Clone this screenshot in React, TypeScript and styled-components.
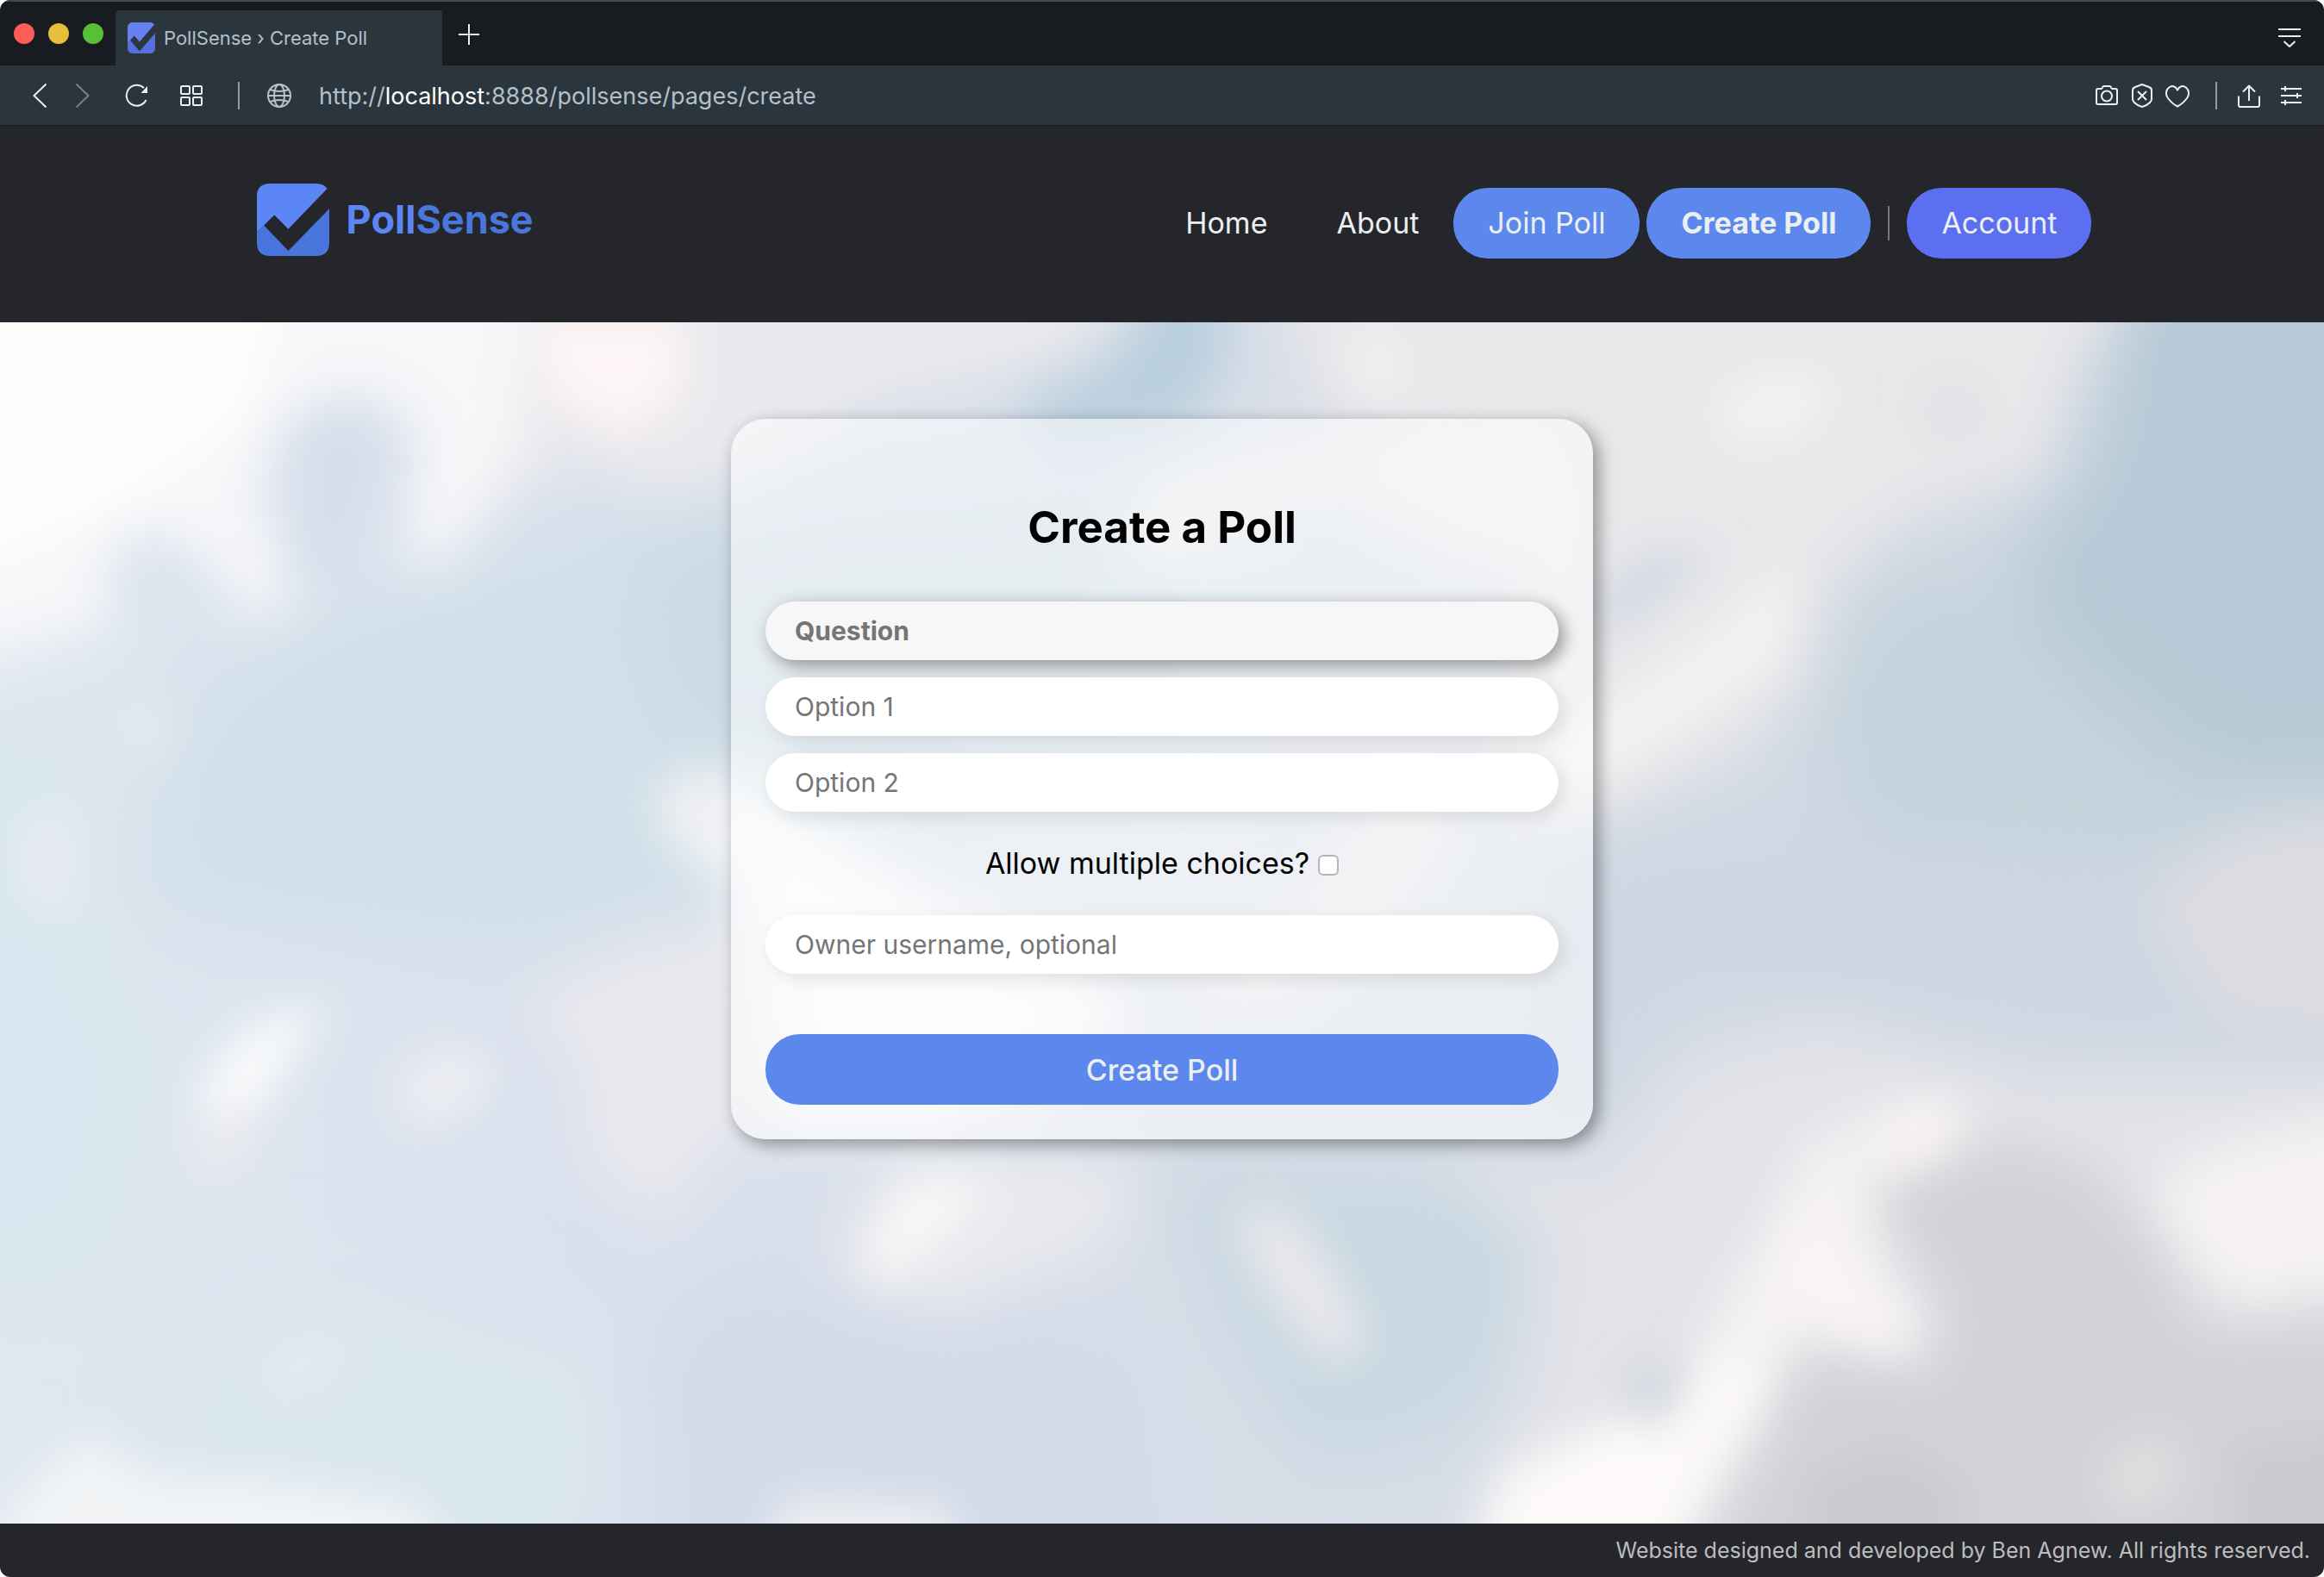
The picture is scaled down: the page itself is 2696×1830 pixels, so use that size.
import React from "react";
import styled, { createGlobalStyle } from "styled-components";

const colors = {
  strip: "#181c20",
  chrome: "#2b353e",
  chromeIcon: "#eceff0",
  chromeText: "#b3c0ca",
  panel: "#25262b",
  primary: "#5c88ee",
  account: "#5c6ff0",
  light: "#eceff1",
  hint: "#757575",
};

const GlobalStyle = createGlobalStyle`
  *, *::before, *::after { box-sizing: border-box; }
  body {
    margin: 0;
    background: #fff;
    font-family: Inter, "Open Sans", sans-serif;
  }
  button, input { font-family: inherit; }
`;

const Window = styled.div`
  display: flex;
  flex-direction: column;
  min-height: 100vh;
  border-radius: 12px;
  overflow: hidden;
`;

/* Browser chrome */

const TabStrip = styled.div`
  display: flex;
  align-items: flex-end;
  height: 76px;
  padding-right: 26px;
  background: ${colors.strip};
  border-top: 2px solid #44494d;
`;

const TrafficLights = styled.div`
  display: flex;
  align-self: center;
  gap: 16px;
  padding: 0 14px 0 16px;
`;

const Light = styled.button<{ $color: string }>`
  width: 24px;
  height: 24px;
  padding: 0;
  border: 0;
  border-radius: 50%;
  background: ${(p) => p.$color};
`;

const Tab = styled.div`
  display: flex;
  align-items: center;
  gap: 10px;
  width: 379px;
  height: 64px;
  padding: 0 14px;
  border-radius: 4px 4px 0 0;
  background: ${colors.chrome};
  color: ${colors.chromeText};
  font-size: 22px;
  line-height: 28px;
`;

const IconButton = styled.button<{ $dim?: boolean }>`
  display: flex;
  padding: 0;
  border: 0;
  background: none;
  color: ${colors.chromeIcon};
  opacity: ${(p) => (p.$dim ? 0.4 : 1)};
`;

const StripButton = styled(IconButton)`
  align-self: center;
  margin-left: 17px;
`;

const StripMenu = styled(IconButton)`
  align-self: center;
  margin-left: auto;
  padding-top: 12px;
`;

const Toolbar = styled.div`
  display: flex;
  align-items: center;
  height: 70px;
  padding: 0 24px 0 32px;
  background: ${colors.chrome};
  border-bottom: 1px solid #17191d;
`;

const IconGroup = styled.div<{ $gap: number }>`
  display: flex;
  align-items: center;
  gap: ${(p) => p.$gap}px;
`;

const ToolbarRule = styled.span<{ $before: number; $after: number }>`
  width: 2px;
  height: 32px;
  margin: 0 ${(p) => p.$after}px 0 ${(p) => p.$before}px;
  background: #9a9a9a;
`;

const Address = styled.div`
  flex: 1;
  padding: 3px 0 0 32px;
  color: ${colors.chromeText};
  font-size: 27px;
  line-height: 34px;
`;

const Host = styled.span`
  color: #fff;
`;

/* Site */

const SiteHeader = styled.header`
  display: flex;
  align-items: center;
  justify-content: space-between;
  height: 228px;
  padding: 0 10% 2px;
  background: ${colors.panel};
`;

const Brand = styled.a`
  display: flex;
  align-items: center;
  gap: 20px;
  padding: 0 0 8px 28px;
  color: #5b86f3;
  font-size: 45px;
  font-weight: 700;
  line-height: 52px;
  text-decoration: none;
`;

const BrandTail = styled.span`
  color: #4976dc;
`;

const SiteNav = styled.nav`
  display: flex;
  align-items: center;
`;

const NavLink = styled.a<{ $fill?: string; $active?: boolean }>`
  padding: 21px 40px;
  border-radius: 40px;
  background: ${(p) => p.$fill ?? "none"};
  color: ${colors.light};
  font-size: 34px;
  font-weight: ${(p) => (p.$active ? 700 : 400)};
  line-height: 40px;
  text-decoration: none;
`;

const PillPair = styled.div`
  display: flex;
  gap: 8px;
`;

const NavRule = styled.span`
  width: 2px;
  height: 40px;
  margin: 0 20px;
  background: #77797c;
`;

const Main = styled.main`
  position: relative;
  display: flex;
  flex: 1;
  flex-direction: column;
  align-items: center;
  padding: 112px 40px;
`;

const SkyCanvas = styled.svg`
  position: absolute;
  inset: 0;
  width: 100%;
  height: 100%;
`;

const Card = styled.form`
  position: relative;
  display: flex;
  flex-direction: column;
  gap: 20px;
  width: 100%;
  max-width: 1000px;
  padding: 40px;
  border-radius: 40px;
  background: rgba(255, 255, 255, 0.52);
  box-shadow: 6px 6px 20px rgba(0, 0, 0, 0.4);
`;

const Title = styled.h1`
  margin: 56px 0 36px;
  color: #000;
  font-size: 51px;
  font-weight: 700;
  line-height: 60px;
  text-align: center;
`;

const Field = styled.input<{ $strong?: boolean }>`
  width: 100%;
  height: 68px;
  padding: 0 34px;
  border: 0;
  border-radius: 34px;
  outline: 0;
  background: ${(p) => (p.$strong ? "#f7f7f7" : "#fff")};
  box-shadow: 6px 6px 20px rgba(0, 0, 0, ${(p) => (p.$strong ? 0.4 : 0.1)});
  font-size: 30px;
  font-weight: ${(p) => (p.$strong ? 700 : 400)};
  &::placeholder {
    color: ${colors.hint};
    opacity: 1;
  }
`;

const CheckRow = styled.label`
  display: flex;
  align-items: center;
  justify-content: center;
  gap: 10px;
  margin: 20px 0;
  color: #000;
  font-size: 34px;
  line-height: 40px;
`;

const Checkbox = styled.input`
  appearance: none;
  width: 24px;
  height: 24px;
  margin: 4px 0 0;
  border: 2px solid #b4b5b6;
  border-radius: 6px;
  background: #fff;
  &:checked { background: ${colors.primary}; }
`;

const Submit = styled.button`
  height: 82px;
  margin-top: 50px;
  border: 0;
  border-radius: 40px;
  background: ${colors.primary};
  color: ${colors.light};
  font-size: 34px;
  font-weight: 500;
`;

const SiteFooter = styled.footer`
  padding: 16px;
  background: ${colors.panel};
  color: #bcbdbe;
  font-size: 25px;
  line-height: 30px;
  text-align: right;
`;

/* Drawings */

const Logo = ({ size, height, light, dark }: { size: number; height: number; light: string; dark: string }) => (
  <svg width={size} height={height} viewBox="0 0 83 83" preserveAspectRatio="none" aria-hidden="true">
    <path fill={light} d="M0 56L20 36L36 52L80.500 6Q77 0 68 0H15Q0 0 0 15Z" />
    <path fill={dark} d="M0 56L8 48L36 77L83 29V68Q83 83 68 83H15Q0 83 0 68Z" />
  </svg>
);

const Glyph = ({ children }: { children: React.ReactNode }) => (
  <svg
    width="28"
    height="28"
    viewBox="0 0 28 28"
    fill="none"
    stroke="currentColor"
    strokeWidth={2}
    strokeLinejoin="round"
    aria-hidden="true"
  >
    {children}
  </svg>
);

/* Cloud layers, painted back to front: [colour, points] */
type Shape = [string, string];

const wide: Shape[] = [
  ["#d2e0e9", "230,480 420,360 800,250 1120,200 1568,150 1800,250 1700,520 1300,600 1000,720 700,800 400,770 180,740"],
  ["#cbd9e2", "860,300 1120,220 1560,200 1600,500 1100,560 900,500"],
  ["#d8e7ef", "-200,520 120,540 130,800 220,880 150,1180 -200,1240"],
  ["#dae6ee", "360,1180 620,1240 830,1280 860,1400 700,1700 300,1700 200,1350"],
  ["#d3dbe8", "1000,1180 1560,1260 1620,1700 900,1600 850,1280"],
  ["#c9d8e1", "1560,1040 2060,1080 2060,1250 1980,1380 1760,1440 1640,1250"],
  ["#ced7e2", "2100,640 2500,600 3000,720 3136,900 2700,900 2300,860 2130,1020 2060,960"],
  ["#c5d3dc", "2440,480 2560,300 2900,400 3300,480 3300,620 2900,680 2500,640"],
  ["#b5c9d6", "2700,300 2820,200 2850,60 2900,-200 3340,-200 3340,560 2980,560 2800,420"],
];

const soft: Shape[] = [
  ["#ebe9ed", "700,-60 1560,-60 1420,50 1180,95 1010,190 880,215 780,170 700,210 600,290 560,250 640,100"],
  ["#f7f7f9", "-100,-100 740,-100 710,60 690,170 640,250 590,310 545,290 570,130 480,85 380,120 345,220 400,350 330,370 290,300 200,260 140,290 150,380 60,400 -100,440"],
  ["#fffefc", "-100,-100 400,-100 330,120 160,230 -100,330"],
  ["#b9cfdd", "1360,100 1500,50 1580,-100 1640,-100 1660,50 1600,130 1420,160"],
  ["#e9e7ea", "1720,-100 2900,-100 2800,60 2750,190 2580,240 2470,320 2430,460 2320,550 2150,620 2020,620 2060,420 2060,240 1960,130 1780,110"],
  ["#ece9ed", "1500,300 1560,200 1900,130 2100,130 2140,320 1980,300 1800,210 1600,300"],
  ["#f8f8f9", "950,560 1060,600 1260,720 1450,800 1540,870 1400,960 1250,1010 1040,1010 960,840 1000,700 920,650"],
  ["#e9e8ee", "700,850 850,780 1010,750 1060,1010 960,1030 930,1090 880,1120 790,1050 780,930"],
  ["#eae8ec", "1560,840 1760,740 1840,620 1920,560 1960,640 1860,760 1720,850"],
  ["#e2e2e8", "1940,1040 2160,1060 2280,920 2450,870 2750,940 3300,940 3300,1600 1960,1600 2060,1330 2090,1150"],
  ["#dedce2", "2900,720 3020,640 3300,600 3300,900 3000,870"],
  ["#e9e9ee", "1180,1070 1400,1030 1540,1070 1480,1160 1340,1210 1280,1240 1120,1190"],
  ["#f6f3f3", "1960,1600 2020,1430 2260,1370 2330,1220 2390,1130 2440,1030 2600,970 2700,1010 2540,1090 2540,1200 2620,1280 2420,1280 2370,1400 2300,1480 2240,1600"],
  ["#d3d2d8", "2510,1090 2680,1010 2820,1050 2920,1150 2970,1250 3300,1230 3300,1600 2260,1600 2400,1330 2440,1270 2600,1310 2620,1220"],
  ["#f6f3f2", "2900,1080 3000,1030 3300,960 3300,1180 3020,1230 2950,1170"],
];

const fine: Shape[] = [
  ["#d5deea", "400,150 470,110 520,150 500,230 460,310 415,310"],
  ["#dbe3ee", "185,290 240,310 260,370 210,390"],
  ["#fdf5f5", "720,-10 920,-10 920,90 840,140 740,90"],
  ["#f8f9fa", "270,950 330,880 440,850 390,930 340,1000 270,1000"],
  ["#e8e9ef", "250,1000 370,970 330,1060 270,1080"],
  ["#edeef3", "530,960 580,910 670,920 650,970 570,1010"],
  ["#f1f0f3", "890,580 950,570 1000,640 930,650 890,620"],
  ["#e8e7ec", "1660,1110 1740,1110 1800,1180 1850,1280 1790,1300 1700,1200"],
  ["#f7f7f7", "1170,1160 1220,1070 1350,1070 1270,1150 1180,1200"],
  ["#f0eff0", "1820,20 1890,10 1900,90 1830,90"],
  ["#f3f2f1", "2310,100 2380,60 2480,70 2440,140 2340,160"],
  ["#f4f2f2", "2080,560 2150,490 2300,400 2420,300 2400,420 2260,510 2120,590"],
  ["#d0d8e3", "2160,340 2220,290 2320,290 2220,360 2160,400"],
  ["#e0dfe3", "2590,90 2650,80 2690,130 2620,150"],
  ["#cbcad0", "2440,1440 2560,1400 2660,1460 2620,1600 2420,1600"],
  ["#cacbd0", "3010,1400 3200,1380 3200,1600 3000,1600"],
  ["#e4e0e1", "2840,1430 2920,1390 2940,1450 2860,1490"],
  ["#d0d7de", "2190,1320 2250,1290 2260,1350 2210,1370"],
  ["#fdfaf9", "2040,1460 2180,1380 2260,1400 2340,1280 2370,1330 2300,1430 2200,1600 2000,1600"],
  ["#f9f4f4", "2400,1200 2440,1110 2490,1190 2580,1260 2540,1280"],
  ["#faf4f2", "2540,1010 2620,980 2640,1010 2560,1050"],
  ["#e6eaf2", "20,620 90,600 110,650 100,740 40,740 20,700"],
  ["#e3e9f1", "160,490 220,470 230,530 180,550"],
  ["#f2f4f6", "-60,1600 40,1450 120,1390 200,1440 380,1450 560,1480 640,1600"],
  ["#e8ebef", "340,1310 430,1270 480,1285 390,1340"],
  ["#eeeff2", "1010,1600 1060,1470 1280,1480 1300,1600"],
];

const Layer = ({ shapes, blur }: { shapes: Shape[]; blur: string }) => (
  <g filter={`url(#${blur})`}>
    {shapes.map(([fill, points]) => (
      <polygon key={points} fill={fill} points={points} />
    ))}
  </g>
);

const blurs: Array<[string, number]> = [
  ["wide", 54],
  ["soft", 34],
  ["fine", 26],
];

const Sky = () => (
  <SkyCanvas viewBox="0 0 3136 1501" preserveAspectRatio="none" aria-hidden="true">
    <defs>
      {blurs.map(([id, deviation]) => (
        <filter key={id} id={id} filterUnits="userSpaceOnUse" x="-300" y="-300" width="3736" height="2101">
          <feGaussianBlur stdDeviation={deviation} />
        </filter>
      ))}
      <linearGradient id="shade" x1="0" x2="1" y1="0" y2="0">
        <stop offset="0" stopColor="#dfe7f0" />
        <stop offset="0.25" stopColor="#dae1ed" />
        <stop offset="0.5" stopColor="#d9dfe9" />
        <stop offset="1" stopColor="#d0d8e2" />
      </linearGradient>
    </defs>
    <rect width="3136" height="1501" fill="url(#shade)" />
    <Layer shapes={wide} blur="wide" />
    <Layer shapes={soft} blur="soft" />
    <Layer shapes={fine} blur="fine" />
  </SkyCanvas>
);

export default function App() {
  return (
    <>
      <GlobalStyle />
      <Window>
        <TabStrip>
          <TrafficLights>
            <Light $color="#fe5c57" aria-label="Close" />
            <Light $color="#e5bf3c" aria-label="Minimise" />
            <Light $color="#58c038" aria-label="Zoom" />
          </TrafficLights>
          <Tab>
            <Logo size={32} height={36} light="#6680f0" dark="#566fdc" />
            PollSense › Create Poll
          </Tab>
          <StripButton aria-label="New tab">
            <Glyph>
              <path d="M14 3V27M2 15H26" />
            </Glyph>
          </StripButton>
          <StripMenu aria-label="Tab menu">
            <Glyph>
              <path d="M1 3H27M1 11H27M7.500 17L14 23L20.500 17" />
            </Glyph>
          </StripMenu>
        </TabStrip>

        <Toolbar>
          <IconGroup $gap={35}>
            <IconGroup $gap={22}>
              <IconButton aria-label="Back">
                <Glyph>
                  <path d="M21.500 0.500L7.500 14L21.500 27.500" />
                </Glyph>
              </IconButton>
              <IconButton aria-label="Forward" $dim>
                <Glyph>
                  <path d="M6.500 0.500L20.500 14L6.500 27.500" />
                </Glyph>
              </IconButton>
            </IconGroup>
            <IconButton aria-label="Reload">
              <Glyph>
                <path d="M24.500 19A12 12 0 1 1 22 5" />
                <path d="M26 3V11H18.500Z" fill="currentColor" stroke="none" />
              </Glyph>
            </IconButton>
            <IconButton aria-label="Speed dial">
              <Glyph>
                <rect x="2" y="3" width="10" height="9" rx="1" />
                <rect x="16" y="3" width="10" height="9" rx="1" />
                <rect x="2" y="16" width="10" height="9" rx="1" />
                <rect x="16" y="16" width="10" height="9" rx="1" />
              </Glyph>
            </IconButton>
          </IconGroup>
          <ToolbarRule $before={40} $after={32} />
          <IconButton aria-label="Site information">
            <Glyph>
              <g opacity="0.75">
                <circle cx="14" cy="14" r="13" />
                <ellipse cx="14" cy="14" rx="6" ry="13" />
                <path d="M1 14H27M3.500 7Q14 11 24.500 7M3.500 21Q14 17 24.500 21" />
              </g>
            </Glyph>
          </IconButton>
          <Address>
            http://<Host>localhost</Host>:8888/pollsense/pages/create
          </Address>
          <IconGroup $gap={13}>
            <IconButton aria-label="Snapshot">
              <Glyph>
                <path d="M4 6H8L10 3H18L20 6H24Q26 6 26 8V22Q26 24 24 24H4Q2 24 2 22V8Q2 6 4 6Z" />
                <circle cx="14" cy="14.500" r="6" />
              </Glyph>
            </IconButton>
            <IconButton aria-label="Ad blocker">
              <Glyph>
                <path d="M14 1L22 4Q25 5 25 8V18Q25 20 23 22Q19 26 14 27Q9 26 5 22Q3 20 3 18V8Q3 5 6 4Z" />
                <path d="M9 9L19 19M19 9L9 19" />
              </Glyph>
            </IconButton>
            <IconButton aria-label="Add bookmark">
              <Glyph>
                <path d="M14 7.500C11.500 2.500 7.500 2.500 5 4C0 7 0 13 3 17C6 21 10 24.500 14 26.500C18 24.500 22 21 25 17C28 13 28 7 23 4C20.500 2.500 16.500 2.500 14 7.500Z" />
              </Glyph>
            </IconButton>
          </IconGroup>
          <ToolbarRule $before={30} $after={23} />
          <IconGroup $gap={21}>
            <IconButton aria-label="Share">
              <Glyph>
                <path d="M2 14.500V25Q2 27 4 27H24Q26 27 26 25V14.500M14 20V3M7 9.500L14 2.500L21 9.500" />
              </Glyph>
            </IconButton>
            <IconButton aria-label="Easy setup">
              <Glyph>
                <path d="M2 6H26M2 14H26M2 22H26M7 3V9M21 11V17M7 19V25" />
              </Glyph>
            </IconButton>
          </IconGroup>
        </Toolbar>

        <SiteHeader>
          <Brand href="#home">
            <Logo size={84} height={84} light="#5b86f3" dark="#4976dc" />
            <span>
              Poll<BrandTail>Sense</BrandTail>
            </span>
          </Brand>
          <SiteNav>
            <NavLink href="#home">Home</NavLink>
            <NavLink href="#about">About</NavLink>
            <PillPair>
              <NavLink href="#join" $fill={colors.primary}>
                Join Poll
              </NavLink>
              <NavLink href="#create" $fill={colors.primary} $active>
                Create Poll
              </NavLink>
            </PillPair>
            <NavRule />
            <NavLink href="#account" $fill={colors.account}>
              Account
            </NavLink>
          </SiteNav>
        </SiteHeader>

        <Main>
          <Sky />
          <Card onSubmit={(e) => e.preventDefault()}>
            <Title>Create a Poll</Title>
            <Field $strong placeholder="Question" aria-label="Question" />
            <Field placeholder="Option 1" aria-label="Option 1" />
            <Field placeholder="Option 2" aria-label="Option 2" />
            <CheckRow>
              Allow multiple choices?
              <Checkbox type="checkbox" />
            </CheckRow>
            <Field placeholder="Owner username, optional" aria-label="Owner username, optional" />
            <Submit type="submit">Create Poll</Submit>
          </Card>
        </Main>

        <SiteFooter>Website designed and developed by Ben Agnew. All rights reserved.</SiteFooter>
      </Window>
    </>
  );
}
